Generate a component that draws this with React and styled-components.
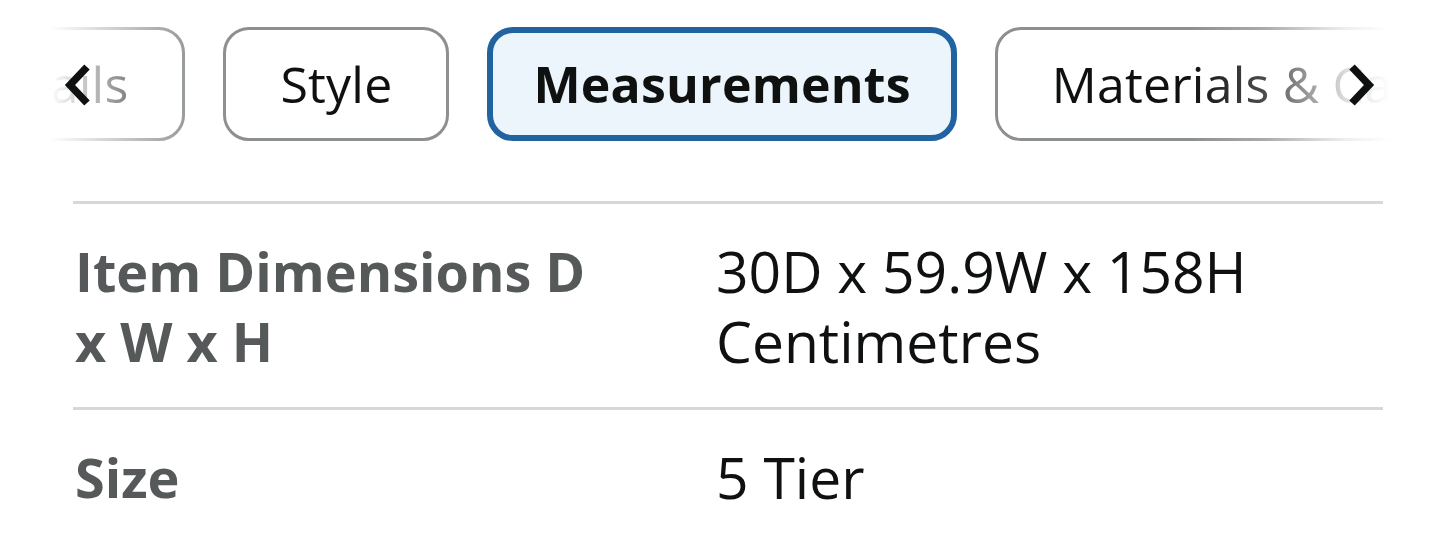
import React from 'react';
import styled, { createGlobalStyle } from 'styled-components';

const GlobalStyle = createGlobalStyle`
  html, body {
    margin: 0;
    padding: 0;
    background: #ffffff;
  }
  body {
    font-family: "Open Sans", "Noto Sans", Arial, sans-serif;
    color: #0f1111;
  }
`;

const Page = styled.div`
  width: 1440px;
  height: 539px;
  overflow: hidden;
  background: #fff;
`;

const TabStrip = styled.div`
  position: relative;
  width: 100%;
  padding-top: 27px;
  overflow: hidden;
`;

const Track = styled.div`
  display: flex;
  gap: 38px;
  margin-left: ${p => p.offset}px;
  white-space: nowrap;
`;

const Tab = styled.div`
  flex: none;
  box-sizing: border-box;
  height: 114px;
  display: flex;
  align-items: center;
  padding: 0 ${p => (p.active ? 40 : 54)}px;
  border: ${p => (p.active ? '6px solid #2162a1' : '3px solid #8d9090')};
  border-radius: 26px;
  background: ${p => (p.active ? '#edf5fc' : '#fff')};
  font-size: 50px;
  font-weight: ${p => (p.active ? 700 : 400)};
  color: #0f1111;
  letter-spacing: 0.2px;
`;

const Fade = styled.div`
  position: absolute;
  top: 0;
  bottom: 0;
  ${p => (p.side === 'left' ? 'left: 0;' : 'right: 0;')}
  width: ${p => (p.side === 'left' ? 200 : 250)}px;
  background: ${p =>
    p.side === 'left'
      ? 'linear-gradient(to right, #fff 0%, #fff 25%, rgba(255,255,255,0.6) 55%, rgba(255,255,255,0) 100%)'
      : 'linear-gradient(to left, #fff 0%, #fff 20%, rgba(255,255,255,0.85) 38%, rgba(255,255,255,0.25) 70%, rgba(255,255,255,0) 100%)'};
  pointer-events: none;
`;

const Arrow = styled.div`
  position: absolute;
  top: 64px;
  ${p => (p.side === 'left' ? 'left: 62px;' : 'left: 1347px;')}
  width: 30px;
  height: 42px;
  display: flex;
  align-items: center;
  justify-content: center;
`;

const Table = styled.div`
  margin: 60px 57px 0 73px;
`;

const Row = styled.div`
  display: grid;
  grid-template-columns: 641px 1fr;
  border-top: 3px solid #d5d9d9;
  padding: 32px 0 31px 2px;
  line-height: 70px;
`;

const Label = styled.div`
  font-size: 54px;
  font-weight: 700;
  color: #565959;
  padding-right: 105px;
`;

const Value = styled.div`
  font-size: 57px;
  color: #0f1111;
`;

const Chevron = ({ dir }) => (
  <svg width="30" height="42" viewBox="0 0 30 42">
    <path
      d={dir === 'left' ? 'M25 3 L8 21 L25 39' : 'M5 3 L22 21 L5 39'}
      fill="none"
      stroke="#0f1111"
      strokeWidth="7.5"
    />
  </svg>
);

const tabs = ['Details', 'Style', 'Measurements', 'Materials & Care'];
const rows = [
  { label: 'Item Dimensions D x W x H', value: '30D x 59.9W x 158H Centimetres' },
  { label: 'Size', value: '5 Tier' },
];

export default function App() {
  return (
    <Page>
      <GlobalStyle />
      <TabStrip>
        <Track offset={-89}>
          {tabs.map(t => (
            <Tab key={t} active={t === 'Measurements'}>{t}</Tab>
          ))}
        </Track>
        <Fade side="left" />
        <Fade side="right" />
        <Arrow side="left"><Chevron dir="left" /></Arrow>
        <Arrow side="right"><Chevron dir="right" /></Arrow>
      </TabStrip>
      <Table>
        {rows.map(r => (
          <Row key={r.label}>
            <Label>{r.label}</Label>
            <Value>{r.value}</Value>
          </Row>
        ))}
      </Table>
    </Page>
  );
}
